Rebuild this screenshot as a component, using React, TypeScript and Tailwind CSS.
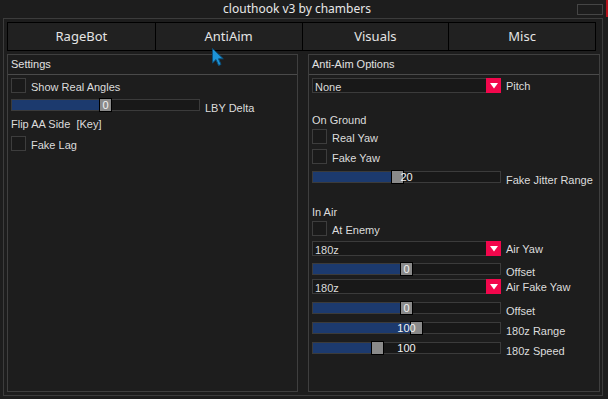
import React from 'react';

type SliderProps = { pos: number; value: string };

const Checkbox = () => (
  <div className="w-[15px] h-[15px] shrink-0 border border-[#3d3d3d] bg-[#1a1a1a]" />
);

const Slider = ({ pos, value }: SliderProps) => (
  <div className="relative w-[189px] h-[12px] shrink-0 border border-[#3b3b3b] bg-[#181818]">
    <div className="h-full bg-[#1c3a6e]" style={{ width: pos }} />
    <div
      className="absolute -top-[2px] w-[13px] h-[14px] border border-black bg-[#8a8a8a]"
      style={{ left: pos }}
    />
    <span className="absolute inset-0 flex items-center justify-center text-[11px] leading-none text-[#f2f2f2]">
      {value}
    </span>
  </div>
);

const Dropdown = ({ value }: { value: string }) => (
  <div className="flex w-[189px] h-[15px] shrink-0">
    <div className="flex-1 h-full overflow-hidden border-y border-l border-[#3b3b3b] bg-[#181818] pl-[2px] pt-[1px] leading-[15px]">
      {value}
    </div>
    <div className="w-[15px] h-full flex items-center justify-center bg-[#f2074c]">
      <svg width="8" height="6" viewBox="0 0 8 6">
        <path d="M0 0 L8 0 L4 5.5 Z" fill="#ffffff" />
      </svg>
    </div>
  </div>
);

const CheckRow = ({ label, className = '' }: { label: string; className?: string }) => (
  <div className={`flex items-center h-[15px] ${className}`}>
    <Checkbox />
    <span className="ml-[5px] mt-[4px] leading-[15px]">{label}</span>
  </div>
);

const SliderRow = ({ pos, value, label, className = '' }: SliderProps & { label: string; className?: string }) => (
  <div className={`flex items-center h-[12px] ${className}`}>
    <Slider pos={pos} value={value} />
    <span className="ml-[5px] mt-[6px] leading-[15px] whitespace-nowrap">{label}</span>
  </div>
);

const DropdownRow = ({ value, label, className = '' }: { value: string; label: string; className?: string }) => (
  <div className={`flex items-center h-[15px] ${className}`}>
    <Dropdown value={value} />
    <span className="ml-[5px] mt-[2px] leading-[15px] whitespace-nowrap">{label}</span>
  </div>
);

const Panel = ({ title, width, children }: { title: string; width: string; children: React.ReactNode }) => (
  <div className={`${width} h-[338px] border border-[#3f3f3f]`}>
    <div className="h-[20px] flex items-center px-[3px] border-b border-[#4a4a4a] leading-[15px] text-[#e2e2e2]">
      {title}
    </div>
    <div className="flex flex-col px-[3px]">{children}</div>
  </div>
);

const tabs = ['RageBot', 'AntiAim', 'Visuals', 'Misc'];

export default function App() {
  return (
    <div className="relative w-[608px] h-[399px] overflow-hidden bg-[#1d1d1d] text-[11px] text-[#dcdcdc] font-['Liberation_Sans',Arial,sans-serif]">
      {/* title bar */}
      <div className="flex items-center h-[18px] pl-[3px] pr-[5px]">
        <div className="flex-1 flex justify-center pl-[14px] text-[12px] text-[#e8e8e8] font-['Noto_Sans',sans-serif] leading-none">
          clouthook v3 by chambers
        </div>
        <div className="w-[26px] h-[11px] border border-[#454545]" />
      </div>

      <div className="ml-[3px] w-[600px] h-[378px] border border-[#3c3c3c] pl-[3px] pr-[2px] pt-[3px]">
        {/* tabs */}
        <div className="grid grid-cols-4 w-[589px] h-[29px] border border-black">
          {tabs.map((t, i) => (
            <div
              key={t}
              className={`flex items-center justify-center bg-[#212121] text-[13px] text-[#e4e4e4] font-['Noto_Sans',sans-serif] ${i > 0 ? 'border-l border-black' : ''}`}
            >
              {t}
            </div>
          ))}
        </div>

        <div className="flex gap-[10px] mt-[3px]">
          <Panel title="Settings" width="w-[291px]">
            <div className="flex items-start h-[15px] mt-[3px]">
              <Checkbox />
              <div className="ml-[5px] pt-[2px] leading-[15px]">Show Real Angles</div>
            </div>
            <SliderRow className="mt-[6px]" pos={87} value="0" label="LBY Delta" />
            <div className="mt-[6px] leading-[15px] whitespace-pre">Flip AA Side  [Key]</div>
            <CheckRow className="mt-[4px]" label="Fake Lag" />
          </Panel>

          <Panel title="Anti-Aim Options" width="w-[292px]">
            <DropdownRow className="mt-[3px]" value="None" label="Pitch" />
            <div className="mt-[20px] leading-[15px]">On Ground</div>
            <CheckRow className="mt-[1px]" label="Real Yaw" />
            <CheckRow className="mt-[5px]" label="Fake Yaw" />
            <SliderRow className="mt-[7px]" pos={78} value="20" label="Fake Jitter Range" />
            <div className="mt-[22px] leading-[15px]">In Air</div>
            <CheckRow className="mt-[1px]" label="At Enemy" />
            <DropdownRow className="mt-[5px]" value="180z" label="Air Yaw" />
            <SliderRow className="mt-[7px]" pos={87} value="0" label="Offset" />
            <DropdownRow className="mt-[4px]" value="180z" label="Air Fake Yaw" />
            <SliderRow className="mt-[8px]" pos={87} value="0" label="Offset" />
            <SliderRow className="mt-[8px]" pos={97} value="100" label="180z Range" />
            <SliderRow className="mt-[8px]" pos={58} value="100" label="180z Speed" />
          </Panel>
        </div>
      </div>

      {/* window behind, at the right edge */}
      <div className="absolute right-0 top-0 w-[2px] h-[17px] bg-[#b3121b]" />

      {/* mouse cursor */}
      <svg className="absolute left-[212px] top-[48px]" width="13" height="19" viewBox="0 0 13 19">
        <path
          d="M0.5 0.5 L0.5 15 L4 11.6 L6.6 17.5 L9 16.4 L6.5 10.8 L11.3 10.8 Z"
          fill="#1d93d6"
          stroke="#0b4f7a"
          strokeWidth="1"
          strokeLinejoin="round"
        />
      </svg>
    </div>
  );
}
